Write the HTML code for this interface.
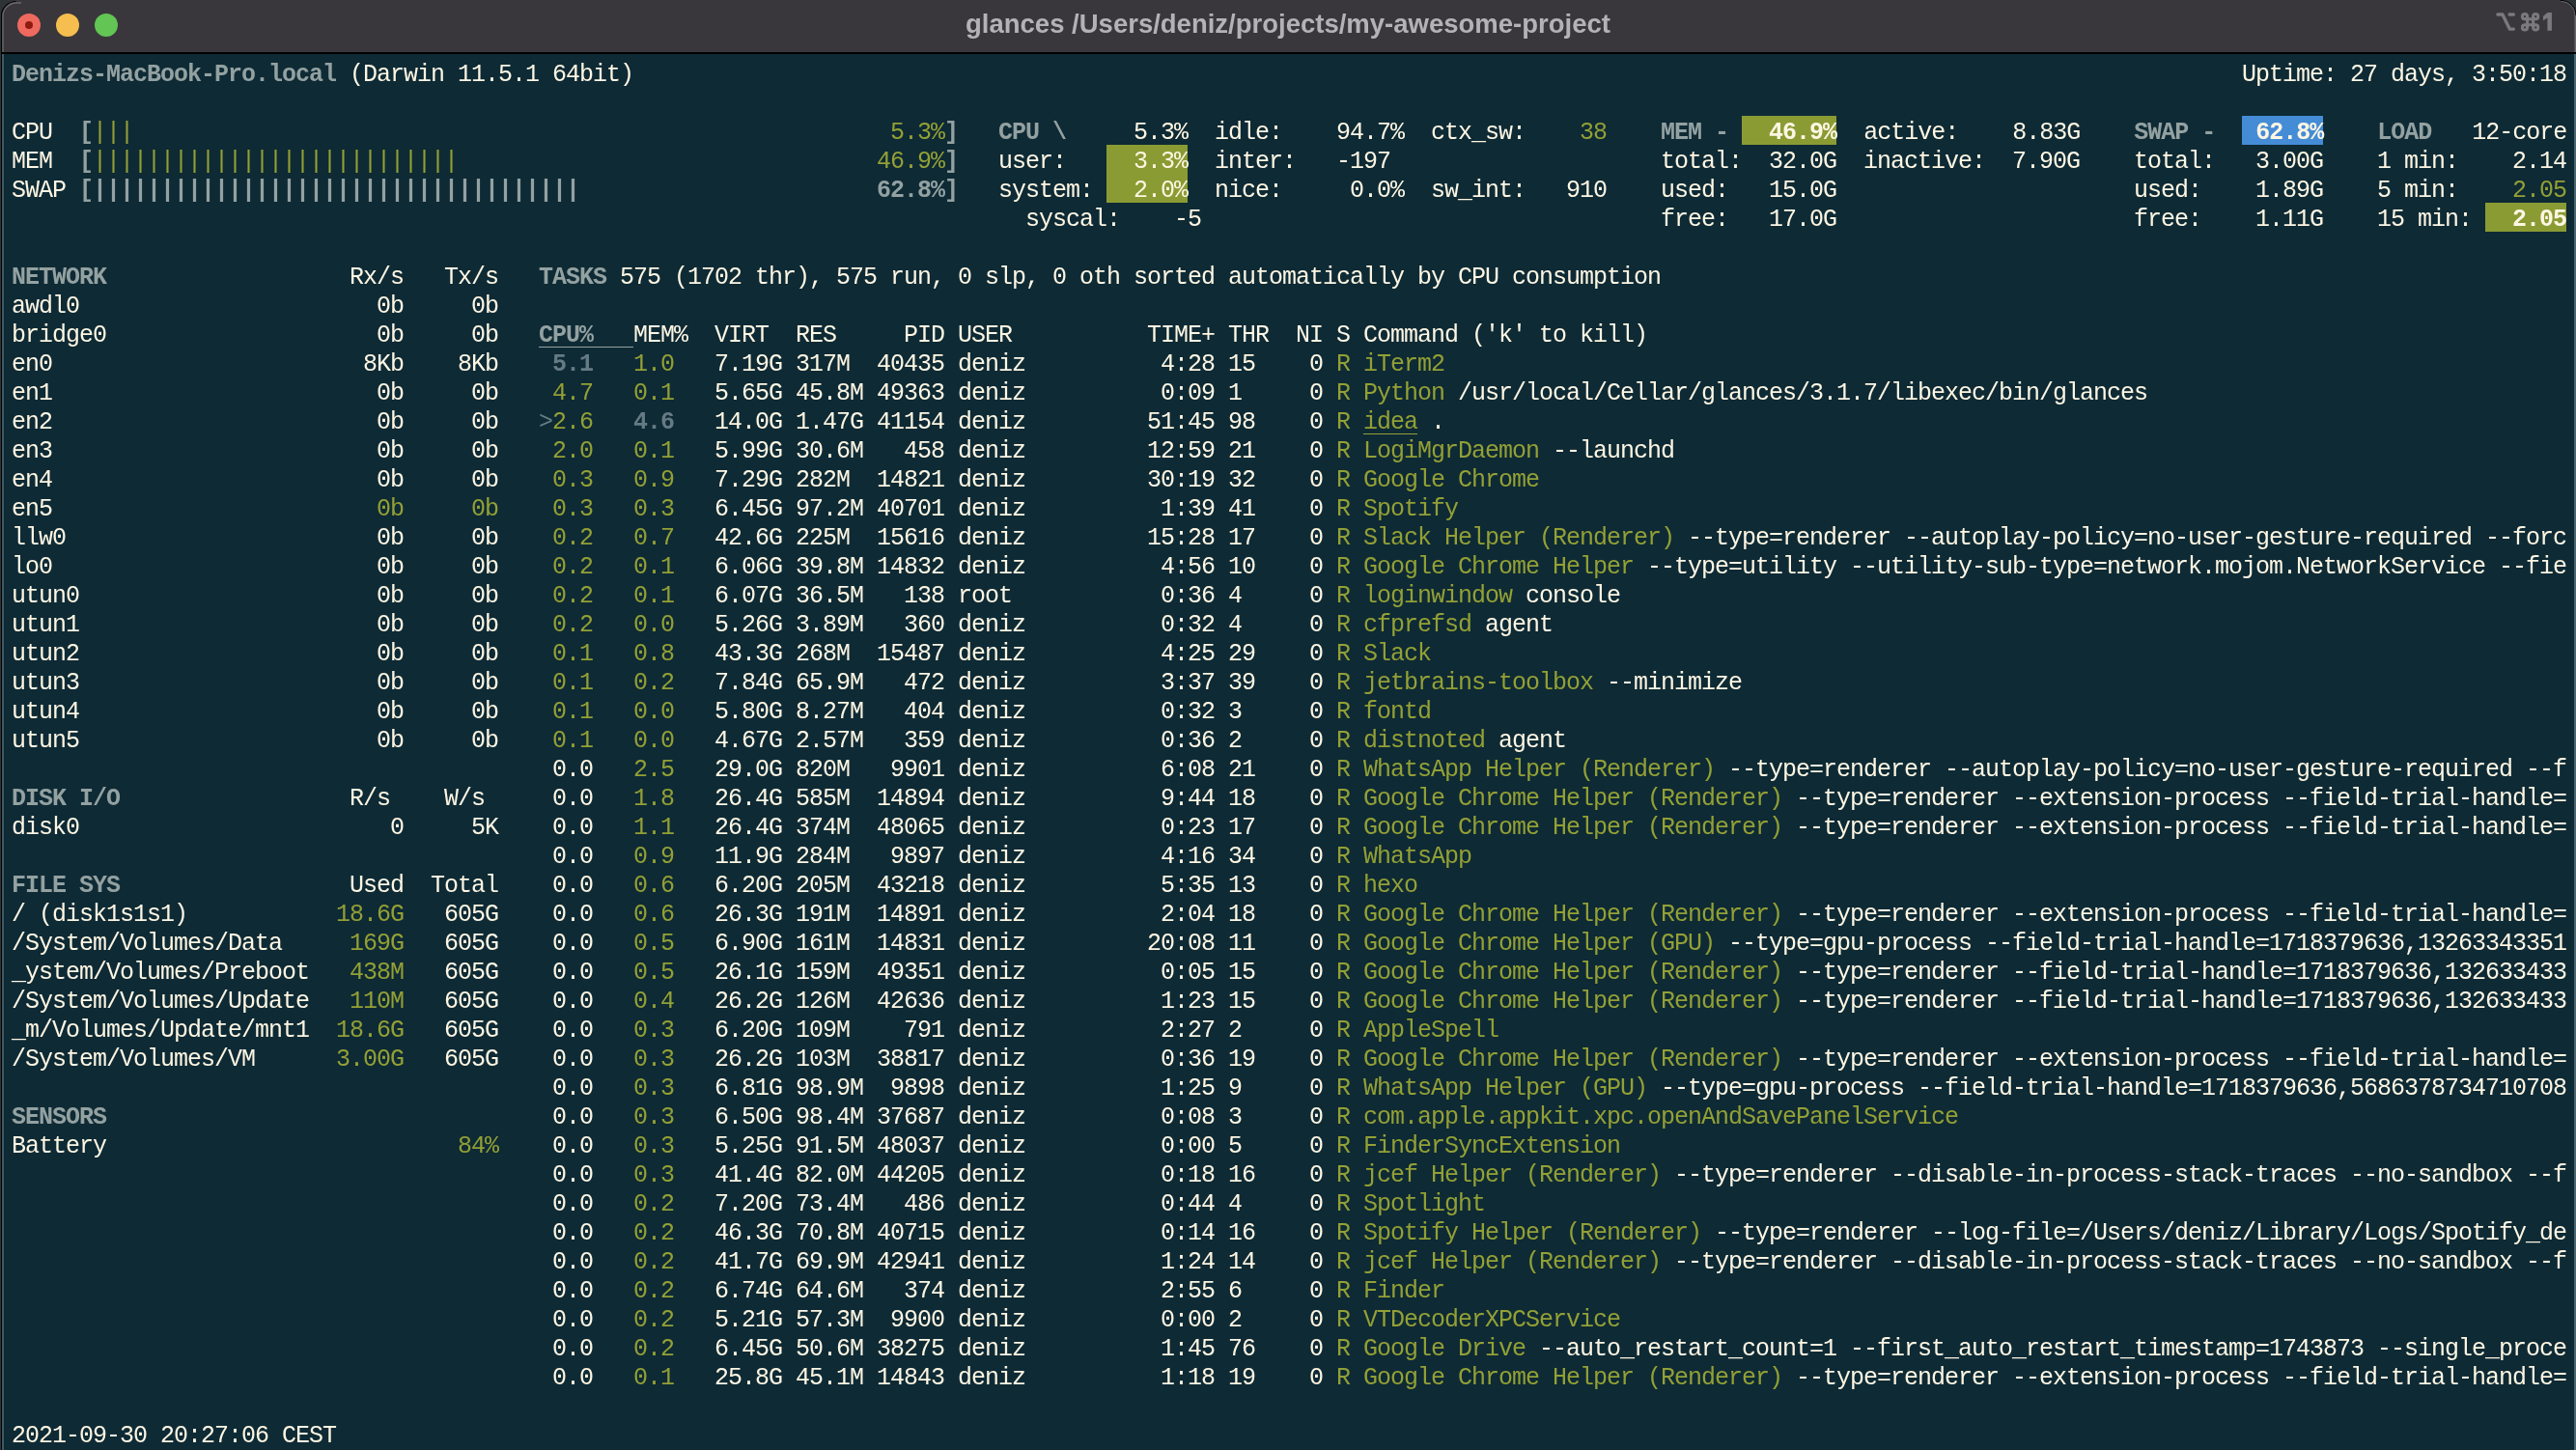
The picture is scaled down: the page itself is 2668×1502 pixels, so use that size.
<!DOCTYPE html>
<html><head><meta charset="utf-8"><style>
html,body{margin:0;padding:0;width:2668px;height:1502px;overflow:hidden;background:#2e3436}
#win{position:absolute;left:0;top:0;width:2668px;height:1540px;overflow:hidden;background:#0e2a35}
#tb{position:absolute;left:0;top:0;width:2668px;height:54px;background:#39373b}
#tbl{position:absolute;left:0;top:54px;width:2668px;height:1.5px;background:#000}
#title{position:absolute;left:0;top:-2px;width:2668px;height:54px;line-height:54px;text-align:center;font-family:"Liberation Sans",sans-serif;font-weight:bold;font-size:27.5px;color:#b4b2b6;will-change:transform}
.tl{position:absolute;top:14px;width:24px;height:24px;border-radius:50%}
#bl{position:absolute;left:0;top:54px;width:1px;height:1540px;background:#2e3436}
#blk{position:absolute;left:1px;top:54px;width:1px;height:1540px;background:#000}
#bl2{position:absolute;left:1.5px;top:0;width:2px;height:54px;background:#6b696c}
#bl3{position:absolute;left:2px;top:55.5px;width:2px;height:1540px;background:#3e5a66}
#br{position:absolute;right:0;top:0;width:2px;height:54px;background:#69676a}
#br2{position:absolute;right:0;top:55.5px;width:2px;height:1540px;background:#4b6670}
.r{position:absolute;left:12px;height:30px;line-height:30px;white-space:pre;font-family:"Liberation Mono",monospace;font-size:25px;color:#fdf6e3;transform:scaleY(1.04);transform-origin:0 21.2px;will-change:transform;letter-spacing:-1.00244px}
.r i{font-style:normal}
.gb{color:#93a1a1;font-weight:bold}
.g{color:#93a1a1}
.o{color:#93a035}
.d{color:#657b83}
.db{color:#657b83;font-weight:bold}
.wb{color:#fdf6e3;font-weight:bold}
.w{color:#fdf6e3}
.bo,.bb{position:absolute;height:30px}
.bo{background:#8a9b33}
.bb{background:#458cd6}
.ug,.uo{position:absolute;height:1.4px}
.ug{background:#93a1a1}
.uo{background:#93a035}
</style></head><body>
<div id="win">
<div id="tb"></div><div id="tbl"></div>
<div id="title">glances /Users/deniz/projects/my-awesome-project</div>
<svg style="position:absolute;left:0;top:0" width="2668" height="54" viewBox="0 0 2668 54"><g fill="none" stroke="#7b797d" stroke-width="3.3" stroke-linecap="round" stroke-linejoin="round"><path d="M2586.9 15H2591.9L2599.3 30.1H2603.4M2599.1 15H2603.4"/></g><g fill="none" stroke="#7b797d" stroke-width="3"><circle cx="2615" cy="17.2" r="2.6"/><circle cx="2626.2" cy="17.2" r="2.6"/><circle cx="2615" cy="28.4" r="2.6"/><circle cx="2626.2" cy="28.4" r="2.6"/><path d="M2617.6 17.2V28.4M2623.6 17.2V28.4M2615 19.8H2626.2M2615 25.8H2626.2"/></g><path fill="#7b797d" d="M2638.5 13.1H2642.9V31.8H2638.4V18.6L2634 21.3V16.7Z"/></svg>
<div class="tl" style="left:18px;background:#ee6a5e"></div>
<div style="position:absolute;left:26px;top:22px;width:8px;height:8px;border-radius:50%;background:#8f1a10"></div>
<div class="tl" style="left:58px;background:#f5be4f"></div>
<div class="tl" style="left:98px;background:#62c554"></div>
<div class="bo" style="left:1146px;top:150px;width:84px"></div>
<div class="bo" style="left:1146px;top:180px;width:84px"></div>
<div class="bo" style="left:1804px;top:120px;width:98px"></div>
<div class="bb" style="left:2322px;top:120px;width:84px"></div>
<div class="bo" style="left:2574px;top:210px;width:84px"></div>
<div class="ug" style="left:558px;top:358.8px;width:98px"></div>
<div class="uo" style="left:1412px;top:448.8px;width:56px"></div>
<div class="r" style="top:62.9px"><i class="gb">Denizs-MacBook-Pro.local </i>(Darwin 11.5.1 64bit)                                                                                                                       Uptime: 27 days, 3:50:18</div>
<div class="r" style="top:122.9px">CPU  <i class="gb">[</i><i class="o">|||                                                        5.3%</i><i class="gb">]   CPU \     </i>5.3%  idle:    94.7%  ctx_sw:    <i class="o">38    </i><i class="gb">MEM -   </i><i class="wb">46.9%  </i>active:    8.83G    <i class="gb">SWAP -   </i><i class="wb">62.8%    </i><i class="gb">LOAD   </i>12-core</div>
<div class="r" style="top:152.9px">MEM  <i class="gb">[</i><i class="o">|||||||||||||||||||||||||||                               46.9%</i><i class="gb">]   </i>user:     <i class="w">3.3%  </i>inter:   -197                    total:  32.0G  inactive:  7.90G    total:   3.00G    1 min:    2.14</div>
<div class="r" style="top:182.9px">SWAP <i class="gb">[||||||||||||||||||||||||||||||||||||                      62.8%]   </i>system:   <i class="w">2.0%  </i>nice:     0.0%  sw_int:   910    used:   15.0G                      used:    1.89G    5 min:    <i class="o">2.05</i></div>
<div class="r" style="top:212.9px">                                                                           syscal:    -5                                  free:   17.0G                      free:    1.11G    15 min:   <i class="wb">2.05</i></div>
<div class="r" style="top:272.9px"><i class="gb">NETWORK                  </i>Rx/s   Tx/s   <i class="gb">TASKS </i>575 (1702 thr), 575 run, 0 slp, 0 oth sorted automatically by CPU consumption</div>
<div class="r" style="top:302.9px">awdl0                      0b     0b</div>
<div class="r" style="top:332.9px">bridge0                    0b     0b   <i class="gb">CPU%   </i>MEM%  VIRT  RES     PID USER          TIME+ THR  NI S Command ('k' to kill)</div>
<div class="r" style="top:362.9px">en0                       8Kb    8Kb    <i class="db">5.1   </i><i class="o">1.0   </i>7.19G 317M  40435 deniz          4:28 15    0 <i class="o">R iTerm2</i></div>
<div class="r" style="top:392.9px">en1                        0b     0b    <i class="o">4.7   0.1   </i>5.65G 45.8M 49363 deniz          0:09 1     0 <i class="o">R Python </i>/usr/local/Cellar/glances/3.1.7/libexec/bin/glances</div>
<div class="r" style="top:422.9px">en2                        0b     0b   <i class="d">&gt;</i><i class="o">2.6   </i><i class="db">4.6   </i>14.0G 1.47G 41154 deniz         51:45 98    0 <i class="o">R idea </i>.</div>
<div class="r" style="top:452.9px">en3                        0b     0b    <i class="o">2.0   0.1   </i>5.99G 30.6M   458 deniz         12:59 21    0 <i class="o">R LogiMgrDaemon </i>--launchd</div>
<div class="r" style="top:482.9px">en4                        0b     0b    <i class="o">0.3   0.9   </i>7.29G 282M  14821 deniz         30:19 32    0 <i class="o">R Google Chrome</i></div>
<div class="r" style="top:512.9px">en5                        <i class="o">0b     0b    0.3   0.3   </i>6.45G 97.2M 40701 deniz          1:39 41    0 <i class="o">R Spotify</i></div>
<div class="r" style="top:542.9px">llw0                       0b     0b    <i class="o">0.2   0.7   </i>42.6G 225M  15616 deniz         15:28 17    0 <i class="o">R Slack Helper (Renderer) </i>--type=renderer --autoplay-policy=no-user-gesture-required --forc</div>
<div class="r" style="top:572.9px">lo0                        0b     0b    <i class="o">0.2   0.1   </i>6.06G 39.8M 14832 deniz          4:56 10    0 <i class="o">R Google Chrome Helper </i>--type=utility --utility-sub-type=network.mojom.NetworkService --fie</div>
<div class="r" style="top:602.9px">utun0                      0b     0b    <i class="o">0.2   0.1   </i>6.07G 36.5M   138 root           0:36 4     0 <i class="o">R loginwindow </i>console</div>
<div class="r" style="top:632.9px">utun1                      0b     0b    <i class="o">0.2   0.0   </i>5.26G 3.89M   360 deniz          0:32 4     0 <i class="o">R cfprefsd </i>agent</div>
<div class="r" style="top:662.9px">utun2                      0b     0b    <i class="o">0.1   0.8   </i>43.3G 268M  15487 deniz          4:25 29    0 <i class="o">R Slack</i></div>
<div class="r" style="top:692.9px">utun3                      0b     0b    <i class="o">0.1   0.2   </i>7.84G 65.9M   472 deniz          3:37 39    0 <i class="o">R jetbrains-toolbox </i>--minimize</div>
<div class="r" style="top:722.9px">utun4                      0b     0b    <i class="o">0.1   0.0   </i>5.80G 8.27M   404 deniz          0:32 3     0 <i class="o">R fontd</i></div>
<div class="r" style="top:752.9px">utun5                      0b     0b    <i class="o">0.1   0.0   </i>4.67G 2.57M   359 deniz          0:36 2     0 <i class="o">R distnoted </i>agent</div>
<div class="r" style="top:782.9px">                                        0.0   <i class="o">2.5   </i>29.0G 820M   9901 deniz          6:08 21    0 <i class="o">R WhatsApp Helper (Renderer) </i>--type=renderer --autoplay-policy=no-user-gesture-required --f</div>
<div class="r" style="top:812.9px"><i class="gb">DISK I/O                 </i>R/s    W/s     0.0   <i class="o">1.8   </i>26.4G 585M  14894 deniz          9:44 18    0 <i class="o">R Google Chrome Helper (Renderer) </i>--type=renderer --extension-process --field-trial-handle=</div>
<div class="r" style="top:842.9px">disk0                       0     5K    0.0   <i class="o">1.1   </i>26.4G 374M  48065 deniz          0:23 17    0 <i class="o">R Google Chrome Helper (Renderer) </i>--type=renderer --extension-process --field-trial-handle=</div>
<div class="r" style="top:872.9px">                                        0.0   <i class="o">0.9   </i>11.9G 284M   9897 deniz          4:16 34    0 <i class="o">R WhatsApp</i></div>
<div class="r" style="top:902.9px"><i class="gb">FILE SYS                 </i>Used  Total    0.0   <i class="o">0.6   </i>6.20G 205M  43218 deniz          5:35 13    0 <i class="o">R hexo</i></div>
<div class="r" style="top:932.9px">/ (disk1s1s1)           <i class="o">18.6G   </i>605G    0.0   <i class="o">0.6   </i>26.3G 191M  14891 deniz          2:04 18    0 <i class="o">R Google Chrome Helper (Renderer) </i>--type=renderer --extension-process --field-trial-handle=</div>
<div class="r" style="top:962.9px">/System/Volumes/Data     <i class="o">169G   </i>605G    0.0   <i class="o">0.5   </i>6.90G 161M  14831 deniz         20:08 11    0 <i class="o">R Google Chrome Helper (GPU) </i>--type=gpu-process --field-trial-handle=1718379636,13263343351</div>
<div class="r" style="top:992.9px">_ystem/Volumes/Preboot   <i class="o">438M   </i>605G    0.0   <i class="o">0.5   </i>26.1G 159M  49351 deniz          0:05 15    0 <i class="o">R Google Chrome Helper (Renderer) </i>--type=renderer --field-trial-handle=1718379636,132633433</div>
<div class="r" style="top:1022.9px">/System/Volumes/Update   <i class="o">110M   </i>605G    0.0   <i class="o">0.4   </i>26.2G 126M  42636 deniz          1:23 15    0 <i class="o">R Google Chrome Helper (Renderer) </i>--type=renderer --field-trial-handle=1718379636,132633433</div>
<div class="r" style="top:1052.9px">_m/Volumes/Update/mnt1  <i class="o">18.6G   </i>605G    0.0   <i class="o">0.3   </i>6.20G 109M    791 deniz          2:27 2     0 <i class="o">R AppleSpell</i></div>
<div class="r" style="top:1082.9px">/System/Volumes/VM      <i class="o">3.00G   </i>605G    0.0   <i class="o">0.3   </i>26.2G 103M  38817 deniz          0:36 19    0 <i class="o">R Google Chrome Helper (Renderer) </i>--type=renderer --extension-process --field-trial-handle=</div>
<div class="r" style="top:1112.9px">                                        0.0   <i class="o">0.3   </i>6.81G 98.9M  9898 deniz          1:25 9     0 <i class="o">R WhatsApp Helper (GPU) </i>--type=gpu-process --field-trial-handle=1718379636,5686378734710708</div>
<div class="r" style="top:1142.9px"><i class="gb">SENSORS                                 </i>0.0   <i class="o">0.3   </i>6.50G 98.4M 37687 deniz          0:08 3     0 <i class="o">R com.apple.appkit.xpc.openAndSavePanelService</i></div>
<div class="r" style="top:1172.9px">Battery                          <i class="o">84%    </i>0.0   <i class="o">0.3   </i>5.25G 91.5M 48037 deniz          0:00 5     0 <i class="o">R FinderSyncExtension</i></div>
<div class="r" style="top:1202.9px">                                        0.0   <i class="o">0.3   </i>41.4G 82.0M 44205 deniz          0:18 16    0 <i class="o">R jcef Helper (Renderer) </i>--type=renderer --disable-in-process-stack-traces --no-sandbox --f</div>
<div class="r" style="top:1232.9px">                                        0.0   <i class="o">0.2   </i>7.20G 73.4M   486 deniz          0:44 4     0 <i class="o">R Spotlight</i></div>
<div class="r" style="top:1262.9px">                                        0.0   <i class="o">0.2   </i>46.3G 70.8M 40715 deniz          0:14 16    0 <i class="o">R Spotify Helper (Renderer) </i>--type=renderer --log-file=/Users/deniz/Library/Logs/Spotify_de</div>
<div class="r" style="top:1292.9px">                                        0.0   <i class="o">0.2   </i>41.7G 69.9M 42941 deniz          1:24 14    0 <i class="o">R jcef Helper (Renderer) </i>--type=renderer --disable-in-process-stack-traces --no-sandbox --f</div>
<div class="r" style="top:1322.9px">                                        0.0   <i class="o">0.2   </i>6.74G 64.6M   374 deniz          2:55 6     0 <i class="o">R Finder</i></div>
<div class="r" style="top:1352.9px">                                        0.0   <i class="o">0.2   </i>5.21G 57.3M  9900 deniz          0:00 2     0 <i class="o">R VTDecoderXPCService</i></div>
<div class="r" style="top:1382.9px">                                        0.0   <i class="o">0.2   </i>6.45G 50.6M 38275 deniz          1:45 76    0 <i class="o">R Google Drive </i>--auto_restart_count=1 --first_auto_restart_timestamp=1743873 --single_proce</div>
<div class="r" style="top:1412.9px">                                        0.0   <i class="o">0.1   </i>25.8G 45.1M 14843 deniz          1:18 19    0 <i class="o">R Google Chrome Helper (Renderer) </i>--type=renderer --extension-process --field-trial-handle=</div>
<div class="r" style="top:1472.9px">2021-09-30 20:27:06 CEST</div>
<div id="bl"></div><div id="blk"></div><div id="bl3"></div><div id="br2"></div>
<svg style="position:absolute;left:0;top:0" width="2668" height="56"><path d="M0 0H16A15 15 0 0 0 1 16V56H0Z" fill="#2e3436"/><path d="M2668 0H2652A15 15 0 0 1 2668 15Z" fill="#2e3436"/><path d="M1.5 54V16.5A15 15 0 0 1 16.5 1.5" fill="none" stroke="#000" stroke-width="1.1"/><path d="M3 54V17A14 14 0 0 1 17 3H22" fill="none" stroke="#6b696c" stroke-width="1.3"/><path d="M2667.5 54V16A15 15 0 0 0 2652.5 1" fill="none" stroke="#69676a" stroke-width="2"/><path d="M2652 0.5A15.5 15.5 0 0 1 2668 16" fill="none" stroke="#000" stroke-width="1.2"/></svg>
</div>
</body></html>
